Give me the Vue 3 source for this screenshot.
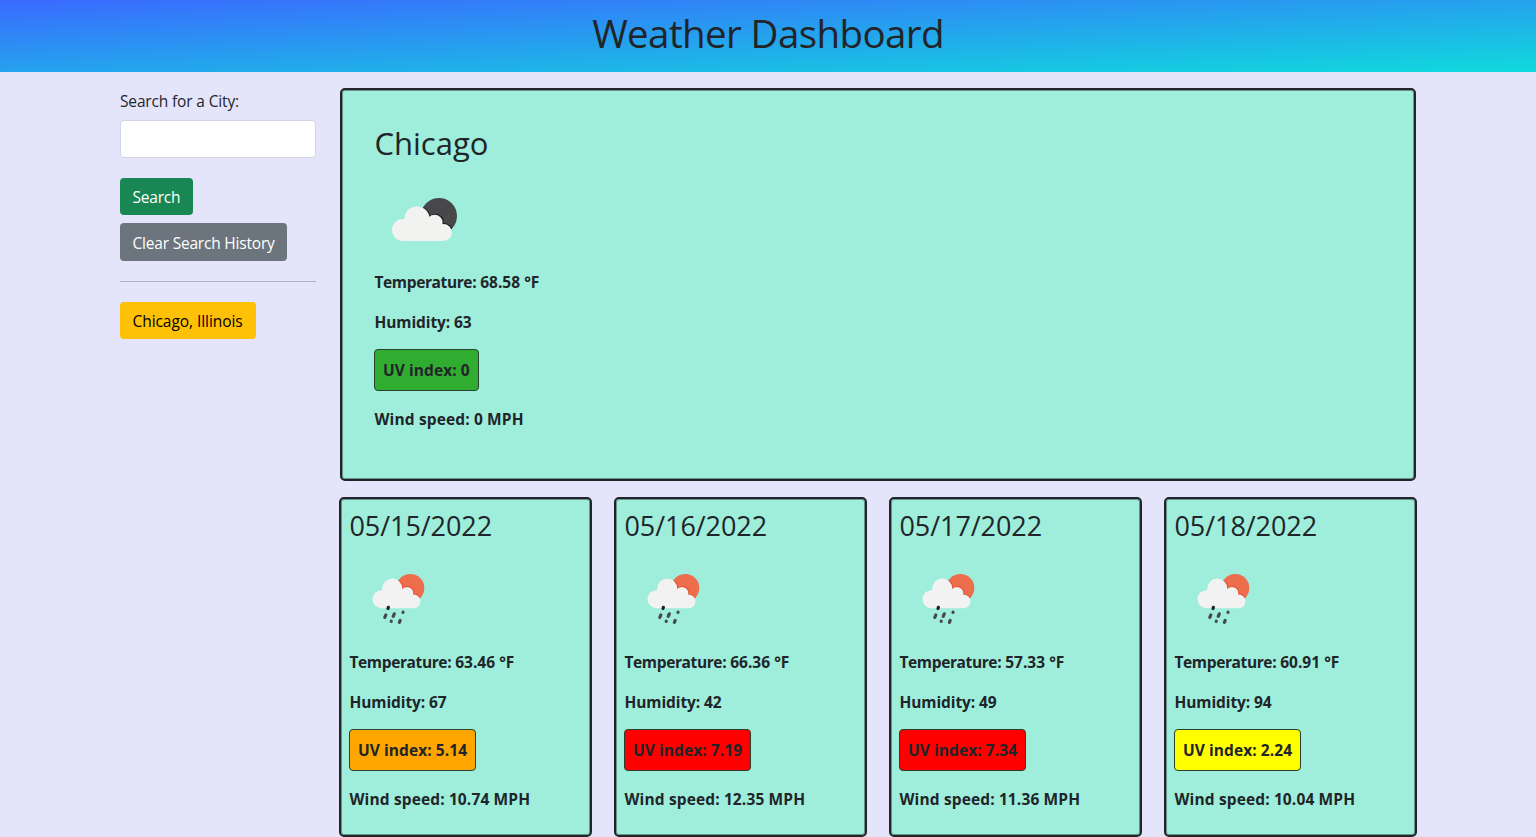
<script setup>
const days = [
  { date: '05/15/2022', temp: '63.46', hum: 67, uv: '5.14', wind: '10.74', level: 'orange' },
  { date: '05/16/2022', temp: '66.36', hum: 42, uv: '7.19', wind: '12.35', level: 'red' },
  { date: '05/17/2022', temp: '57.33', hum: 49, uv: '7.34', wind: '11.36', level: 'red' },
  { date: '05/18/2022', temp: '60.91', hum: 94, uv: '2.24', wind: '10.04', level: 'yellow' }
]
</script>

<template>
  <header><h1>Weather Dashboard</h1></header>
  <div class="layout">
    <aside>
      <label for="city">Search for a City:</label>
      <input id="city" type="text">
      <button class="search">Search</button>
      <button class="clear">Clear Search History</button>
      <hr>
      <button class="recent">Chicago, Illinois</button>
    </aside>
    <main>
      <section class="current">
        <h2>Chicago</h2>
        <svg class="icon-lg" width="100" height="80" viewBox="0 0 100 80">
          <clipPath id="moon"><circle cx="64" cy="33" r="18" /></clipPath>
          <circle cx="64" cy="33" r="18" fill="#48484a" />
          <g clip-path="url(#moon)" fill="#222226">
            <circle cx="42.8" cy="36" r="13" /><circle cx="60.6" cy="39" r="8.3" /><circle cx="69" cy="48.9" r="9" />
          </g>
          <g fill="#f2f2f0">
            <circle cx="42" cy="36" r="12.6" /><circle cx="28" cy="47" r="11" />
            <circle cx="59.6" cy="39.7" r="8" /><circle cx="68.4" cy="49.5" r="8.5" />
            <path d="M28 37L42 30L60 38L68.4 49V58H28Z" />
          </g>
        </svg>
        <p><span class="temp">Temperature:</span> 68.58 °F</p>
        <p class="humidity">Humidity: 63</p>
        <p class="uv green">UV index: 0</p>
        <p class="wind">Wind speed: 0 MPH</p>
      </section>
      <div class="forecast">
        <section v-for="(d, i) in days" :key="d.date" class="day">
          <h3>{{ d.date }}</h3>
          <svg class="icon-day" width="100" height="100" viewBox="0 0 100 100">
            <clipPath :id="'sun' + i"><circle cx="61.3" cy="38" r="14" /></clipPath>
            <circle cx="61.3" cy="38" r="14" fill="#ec6e4c" />
            <g :clip-path="`url(#sun${i})`" fill="#e8492e">
              <circle cx="44.1" cy="38.2" r="10.2" /><circle cx="58.7" cy="42.5" r="6.4" /><circle cx="65.2" cy="50.8" r="7" />
            </g>
            <g fill="#f2f2f2">
              <circle cx="43.3" cy="38.6" r="10" /><circle cx="32.5" cy="49.2" r="9" />
              <circle cx="58" cy="43.2" r="6.3" /><circle cx="64.6" cy="51.4" r="6.9" />
              <path d="M32.5 40L44 34L58 42L64.6 50V58.3H32.5Z" />
            </g>
            <g fill="none" stroke="#48484a" stroke-width="3.2" stroke-linecap="round">
              <path d="M39.4 57.3L39 58.5" stroke="#222" />
              <path d="M36.8 65L35.8 67.4M45.3 63.8L44.2 66.4M54.1 62.2L54 62.4M42.3 71.2L42.2 71.4M51.2 70.4L50.4 72.4" />
            </g>
          </svg>
          <p><span class="temp">Temperature:</span> {{ d.temp }} °F</p>
          <p class="humidity">Humidity: {{ d.hum }}</p>
          <p class="uv" :class="d.level">UV index: {{ d.uv }}</p>
          <p class="wind">Wind speed: {{ d.wind }} MPH</p>
        </section>
      </div>
    </main>
  </div>
</template>

<style>
body { margin: 0; background: #e4e5fa; overflow: hidden; }
</style>
<style scoped>
* { box-sizing: border-box; }
header, .layout, button, input { font-family: "Open Sans", "Noto Sans", sans-serif; color: #212529; font-size: 15.5px; line-height: 24px; }
header { height: 72px; padding-top: 9px; text-align: center; background: linear-gradient(to bottom right, #3a6aff, #10dadc); }
h1, h2, h3 { margin: 0; font-weight: 400; }
h1 { font-size: 38.5px; line-height: 48px; letter-spacing: -.6px; }
.layout { display: flex; width: 1296px; margin: 0 auto; padding-top: 16px; }
aside { width: 196px; margin-right: 24px; display: flex; flex-direction: column; align-items: flex-start; }
label { margin: 1px 0 7px; letter-spacing: -.15px; }
input { width: 196px; height: 37.5px; border: 1px solid #d3d4e4; border-radius: 4px; background: #fff; margin-bottom: 20px; }
button { height: 37.5px; padding: 1px 12.5px 0; border: 0; border-radius: 4px; white-space: nowrap; text-align: left; }
.search { background: #198754; color: #fff; width: 73px; margin-bottom: 8px; letter-spacing: -.2px; }
.clear { background: #6c757d; color: #fff; width: 167px; padding-top: 2px; letter-spacing: -.2px; }
.recent { background: #ffc107; color: #000; width: 136px; letter-spacing: -.06px; }
hr { width: 196px; height: 1px; border: 0; background: #b1b4c8; margin: 20px 0; }
main { width: 1076px; }
section { border: 2px solid #212529; border-radius: 5px; background: #9eeedb; box-shadow: inset 0 0 0 1px rgba(33, 37, 41, .45); }
.current { height: 393px; padding: 34px 32.5px; }
.current h2 { font-size: 31px; line-height: 38px; }
svg { display: block; }
.icon-lg { margin: 21px 0 7px .5px; }
.forecast { display: flex; justify-content: space-between; margin: 16px -1px 0; }
.day { width: 253px; height: 340px; padding: 8px 8.5px; }
.day h3 { font-size: 27px; line-height: 38px; letter-spacing: -.08px; }
.icon-day { margin: 5px 0 0 -.5px; }
p { margin: 0 0 16px; font-weight: 700; line-height: 24px; white-space: nowrap; }
.temp { letter-spacing: -.38px; }
.humidity { letter-spacing: -.1px; }
.wind { letter-spacing: .13px; }
.uv { width: fit-content; height: 42px; margin: -1px 0 16px -.5px; padding: 8px 8px; border: 1px solid #27402f; border-radius: 4px; letter-spacing: .07px; }
.green { background: #30ad30; }
.orange { background: #ffa500; }
.red { background: #f00; }
.yellow { background: #ff0; }
</style>
